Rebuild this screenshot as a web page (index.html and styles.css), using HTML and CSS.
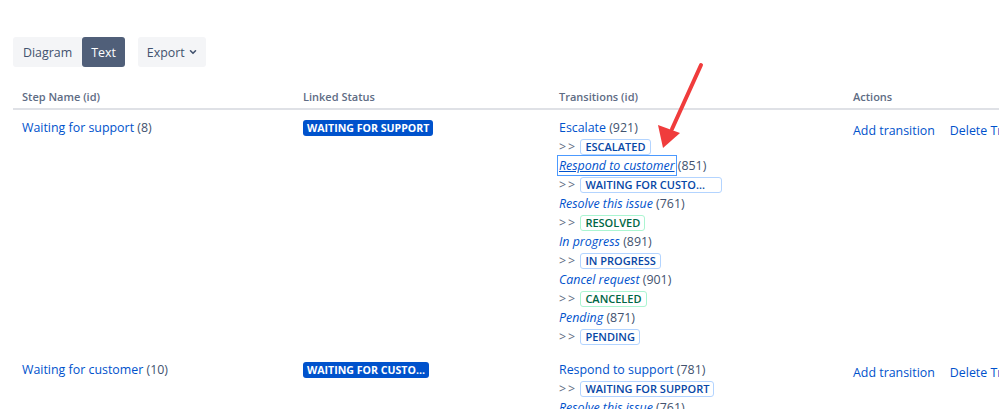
FILE: index.html
```html
<!DOCTYPE html>
<html>
<head>
    <title>Workflow - Text view</title>
    <link rel="stylesheet" href="styles.css">
</head>
<body>
    <div class="page">
        <div class="toolbar">
            <div class="view-switch">
                <button class="btn">Diagram</button>
                <button class="btn active">Text</button>
            </div>
            <button class="btn export">Export
                <svg class="chevron" width="10" height="10" viewBox="0 0 10 10"><path d="M2.5 3.8 L5 6.3 L7.5 3.8" fill="none" stroke="#42526e" stroke-width="1.6" stroke-linecap="round" stroke-linejoin="round"/></svg>
            </button>
        </div>

        <table class="steps">
            <colgroup>
                <col class="col-step">
                <col class="col-status">
                <col class="col-trans">
                <col class="col-actions">
            </colgroup>
            <tr>
                <th>Step Name (id)</th>
                <th>Linked Status</th>
                <th>Transitions (id)</th>
                <th>Actions</th>
            </tr>
            <tr>
                <td><a href="#">Waiting for support</a> <span class="id">(8)</span></td>
                <td><span class="status">Waiting for support</span></td>
                <td>
                    <div class="line"><a href="#">Escalate</a> <span class="id">(921)</span></div>
                    <div class="line"><span class="arrow">&gt;&gt;</span> <span class="lozenge">Escalated</span></div>
                    <div class="line"><a href="#" class="global focused">Respond to customer</a> <span class="id">(851)</span></div>
                    <div class="line"><span class="arrow">&gt;&gt;</span> <span class="lozenge wide">Waiting for custo...</span></div>
                    <div class="line"><a href="#" class="global">Resolve this issue</a> <span class="id">(761)</span></div>
                    <div class="line"><span class="arrow">&gt;&gt;</span> <span class="lozenge done">Resolved</span></div>
                    <div class="line"><a href="#" class="global">In progress</a> <span class="id">(891)</span></div>
                    <div class="line"><span class="arrow">&gt;&gt;</span> <span class="lozenge">In progress</span></div>
                    <div class="line"><a href="#" class="global">Cancel request</a> <span class="id">(901)</span></div>
                    <div class="line"><span class="arrow">&gt;&gt;</span> <span class="lozenge done">Canceled</span></div>
                    <div class="line"><a href="#" class="global">Pending</a> <span class="id">(871)</span></div>
                    <div class="line"><span class="arrow">&gt;&gt;</span> <span class="lozenge">Pending</span></div>
                </td>
                <td class="actions"><a href="#">Add transition</a><a href="#">Delete Transitions</a></td>
            </tr>
            <tr>
                <td><a href="#">Waiting for customer</a> <span class="id">(10)</span></td>
                <td><span class="status">Waiting for custo...</span></td>
                <td>
                    <div class="line"><a href="#">Respond to support</a> <span class="id">(781)</span></div>
                    <div class="line"><span class="arrow">&gt;&gt;</span> <span class="lozenge">Waiting for support</span></div>
                    <div class="line"><a href="#" class="global">Resolve this issue</a> <span class="id">(761)</span></div>
                </td>
                <td class="actions"><a href="#">Add transition</a><a href="#">Delete Transitions</a></td>
            </tr>
        </table>
    </div>

    <!-- annotation arrow drawn over the screenshot -->
    <svg class="callout" width="60" height="100" viewBox="0 0 60 100">
        <line x1="51" y1="10" x2="22" y2="74" stroke="#f03c3c" stroke-width="4" stroke-linecap="round"/>
        <polygon points="13,93 8,70 30,78" fill="#f03c3c"/>
    </svg>
</body>
</html>
```

FILE: styles.css
```css
body {
    margin: 0;
    font-family: "Open Sans", "Noto Sans", Arial, sans-serif;
    font-size: 12.4px;
    color: #172b4d;
    background-color: #fff;
    overflow: hidden;
}

.page {
    padding: 37px 0 0 13px;
}

.toolbar {
    display: flex;
    gap: 13px;
    height: 30px;
}

.view-switch {
    display: flex;
}

.btn {
    font-family: inherit;
    font-size: 12.4px;
    height: 30px;
    padding: 0 9px;
    border: none;
    border-radius: 3px;
    background-color: #f4f5f7;
    color: #42526e;
    cursor: pointer;
}

.view-switch .btn:first-child {
    border-radius: 3px 0 0 3px;
    padding: 0 10px;
}

.btn.active {
    background-color: #505f79;
    color: #fff;
}

.btn.export {
    display: flex;
    align-items: center;
    gap: 3px;
    padding: 0 8px 0 9px;
}

.steps {
    margin-top: 18px;
    width: 1087px;
    border-collapse: collapse;
    table-layout: fixed;
    font-size: 12.4px;
}

.col-step { width: 281px; }
.col-status { width: 256px; }
.col-trans { width: 294px; }
.col-actions { width: 256px; }

th {
    text-align: left;
    font-size: 11px;
    font-weight: 600;
    color: #5e6c84;
    line-height: 16px;
    padding: 4px 9px 3px;
    border-bottom: 2px solid #dfe1e6;
}

td {
    vertical-align: top;
    padding: 8px 9px 6px;
    line-height: 19px;
    white-space: nowrap;
}

.line {
    height: 19px;
}

a {
    color: #0052cc;
    text-decoration: none;
}

a.global {
    font-style: italic;
}

a.focused {
    text-decoration: underline;
    outline: 1px solid #4c9aff;
    outline-offset: 1px;
}

.id {
    color: #42526e;
}

.status {
    display: inline-block;
    vertical-align: middle;
    margin-top: -2px;
    padding: 0 4px;
    line-height: 16px;
    border-radius: 3px;
    background-color: #0052cc;
    color: #fff;
    font-size: 10.6px;
    font-weight: 700;
    text-transform: uppercase;
}

.arrow {
    color: #5e6c84;
    letter-spacing: 2px;
}

.lozenge {
    display: inline-block;
    vertical-align: middle;
    margin-top: -2px;
    padding: 0 4px;
    line-height: 14px;
    border: 1px solid #b3d4ff;
    border-radius: 3px;
    color: #0747a6;
    font-size: 11px;
    font-weight: 600;
    text-transform: uppercase;
}

.lozenge.wide {
    padding-right: 16px;
}

.lozenge.done {
    border-color: #abf5d1;
    color: #006644;
}

.actions {
    padding-top: 11px;
}

.actions a + a {
    margin-left: 15px;
}

.callout {
    position: absolute;
    left: 650px;
    top: 55px;
}
```
